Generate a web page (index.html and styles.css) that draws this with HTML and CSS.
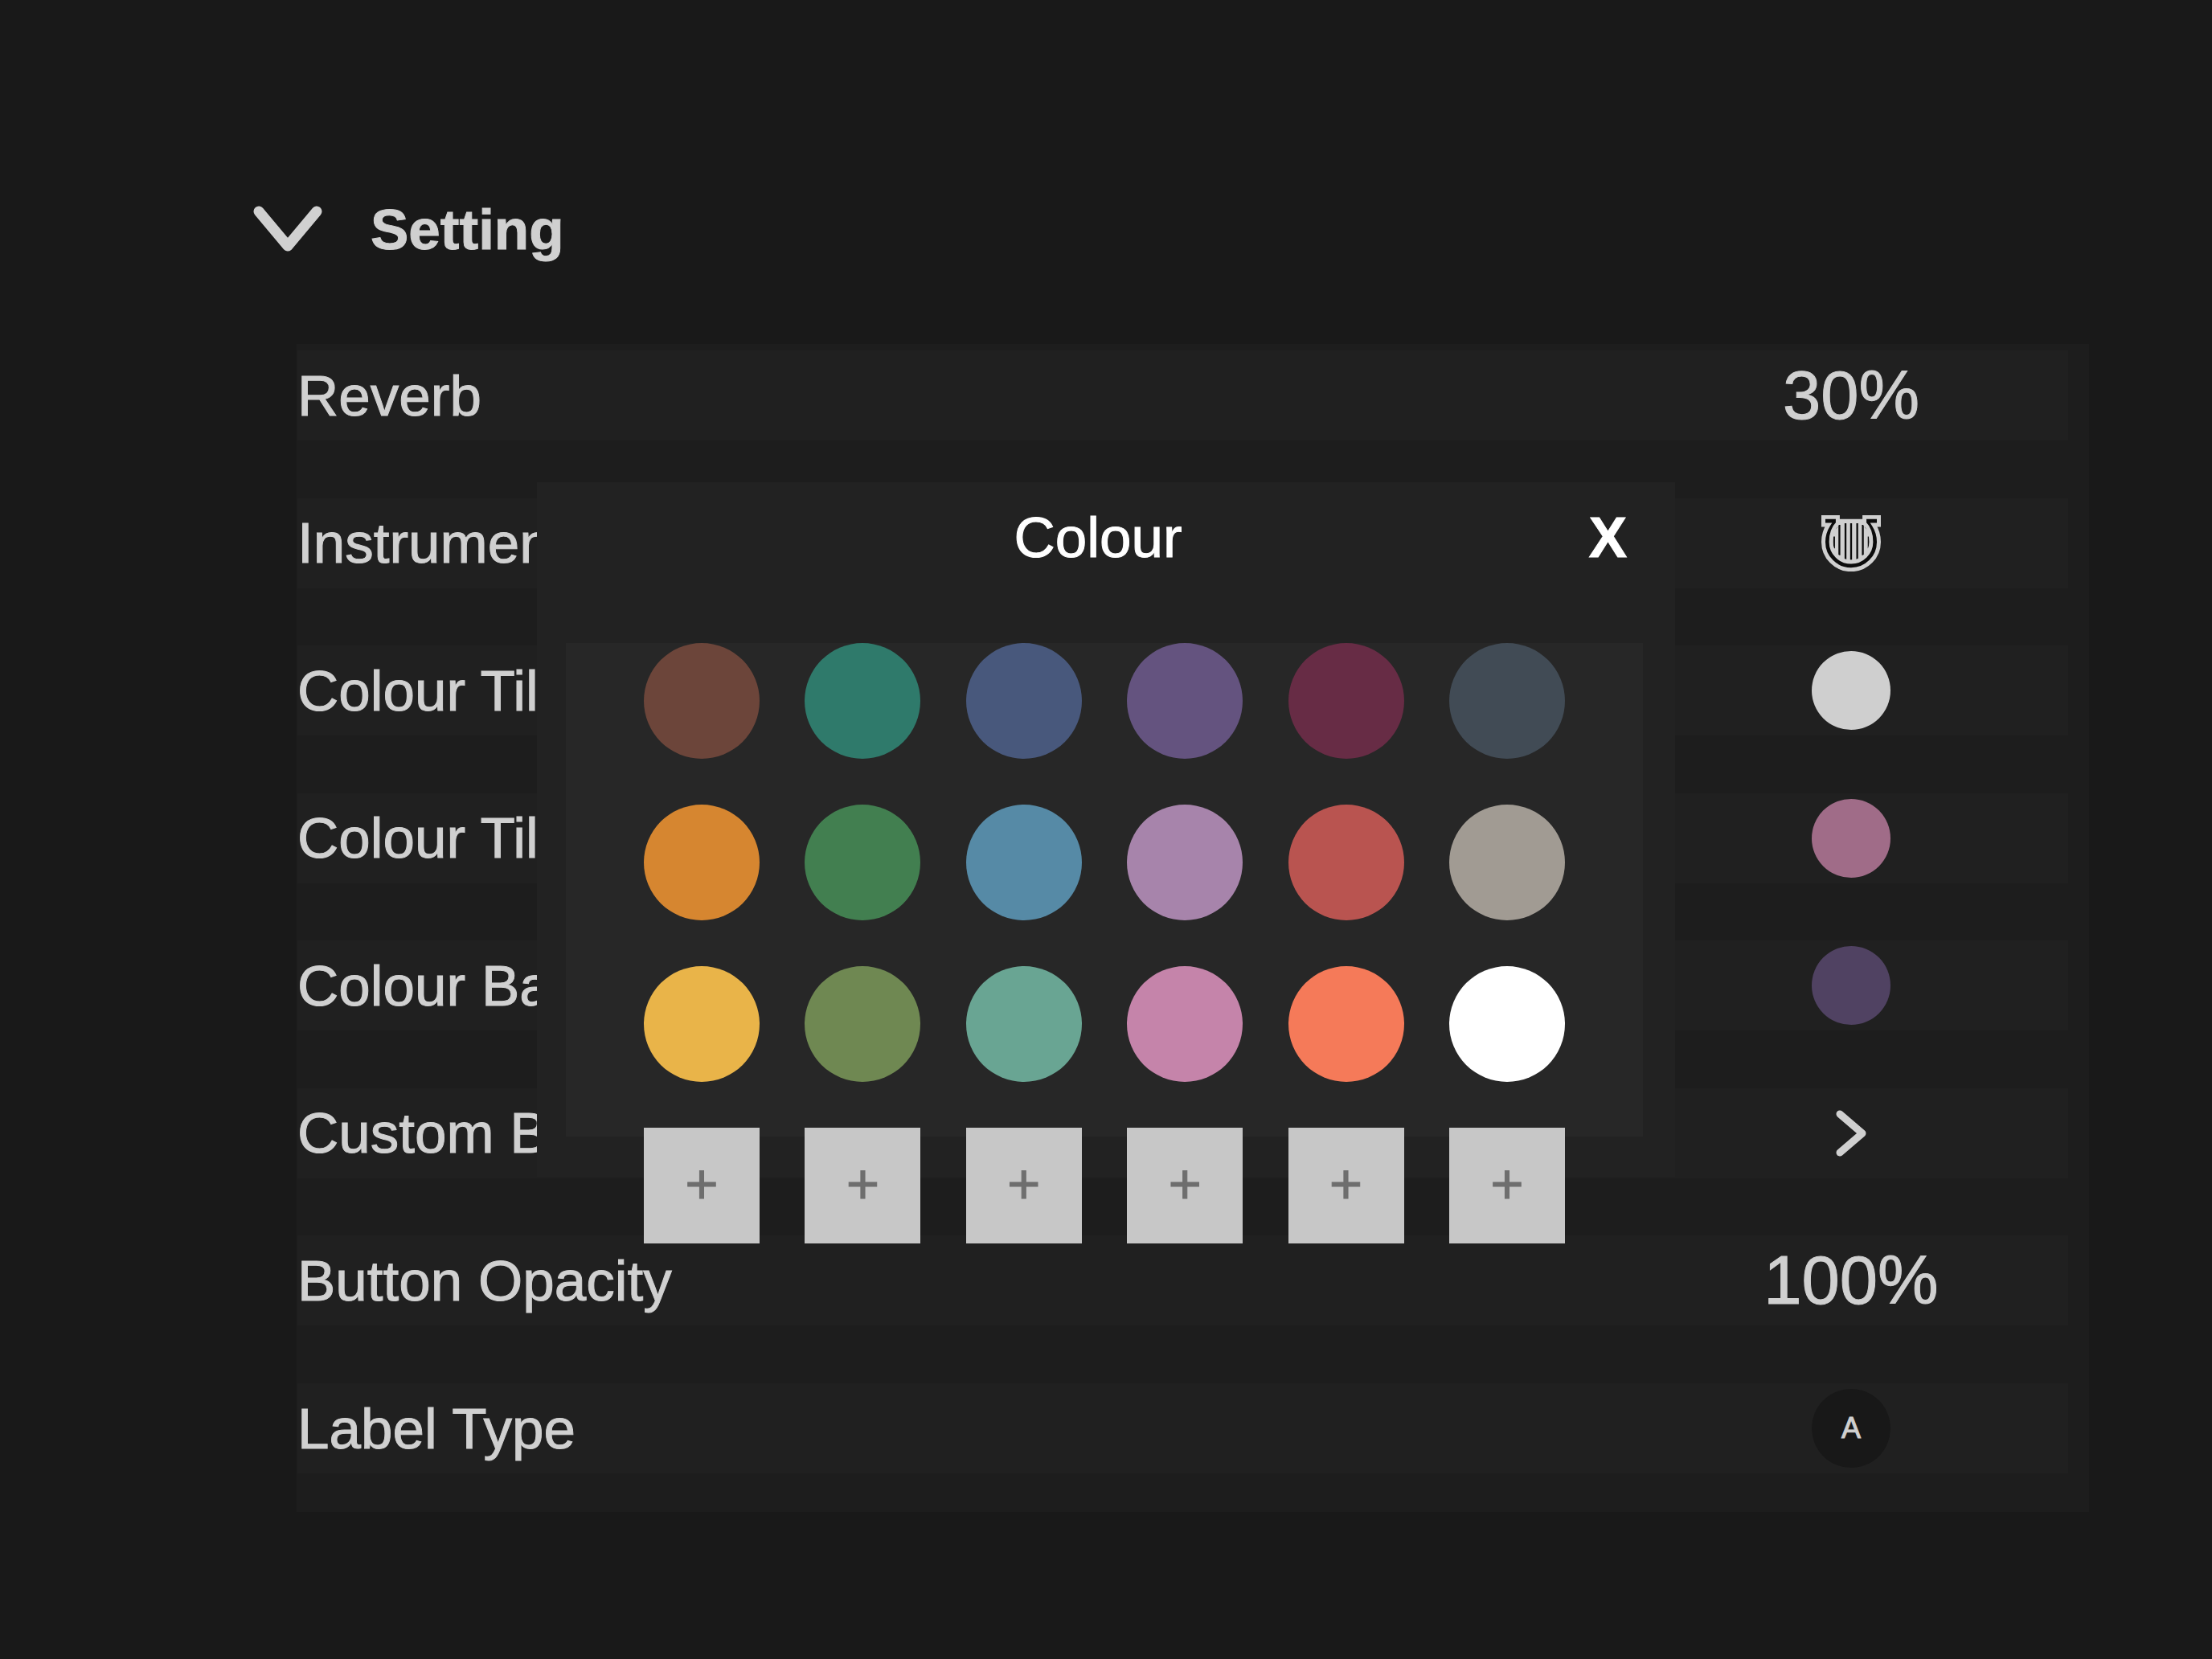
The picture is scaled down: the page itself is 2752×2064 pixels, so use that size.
FILE: index.html
```html
<!DOCTYPE html>
<html lang="en">
  <head>
    <meta charset="UTF-8" />
    <meta name="viewport" content="width=device-width, initial-scale=1.0" />
    <title>Setting</title>
    <link rel="stylesheet" href="styles.css">
  </head>
  <body>
    <header class="page-header">
      <button type="button" class="back-button" aria-label="Close settings">
        <svg width="86" height="58" viewBox="0 0 86 58">
          <path d="M7 7 L43 50 L79 7" fill="none" stroke="#d0d0d0" stroke-width="13" stroke-linecap="round" stroke-linejoin="round" />
        </svg>
      </button>
      <h1>Setting</h1>
    </header>

    <main class="settings">
      <div class="row">
        <span class="label">Reverb</span>
        <button type="button" class="value">30%</button>
      </div>
      <div class="row">
        <span class="label">Instrument</span>
        <button type="button" class="value" aria-label="Lyre">
          <svg width="74" height="70" viewBox="0 0 222 211">
            <circle cx="111" cy="100" r="75" fill="#d0d0d0" />
            <path d="M60 14 H162 V60 H60 Z" fill="#d0d0d0" />
            <path d="M47 80 V124 M67 36 V150 M90 30 V166 M111 30 V168 M134 30 V166 M155 36 V150 M177 80 V124" stroke="#0c0c0c" stroke-width="7" />
            <path d="M7 7 H61 V30 Q36 55 36 100 A75 75 0 0 0 186 100 Q186 55 161 30 V7 H215 V36 H196 Q215 66 215 100 A104 104 0 0 1 7 100 Q7 66 26 36 H7 Z" fill="#0c0c0c" stroke="#d0d0d0" stroke-width="15" />
          </svg>
        </button>
      </div>
      <div class="row">
        <span class="label">Colour Tile 1</span>
        <button type="button" class="value" aria-label="Colour Tile 1"><span class="dot light"></span></button>
      </div>
      <div class="row">
        <span class="label">Colour Tile 2</span>
        <button type="button" class="value" aria-label="Colour Tile 2"><span class="dot pink"></span></button>
      </div>
      <div class="row">
        <span class="label">Colour Background</span>
        <button type="button" class="value" aria-label="Colour Background"><span class="dot purple"></span></button>
      </div>
      <div class="row">
        <span class="label">Custom Button</span>
        <button type="button" class="value" aria-label="Custom Button">
          <svg width="38" height="58" viewBox="0 0 38 58">
            <path d="M5 5 L33 29 L5 53" fill="none" stroke="#d0d0d0" stroke-width="9" stroke-linecap="round" stroke-linejoin="round" />
          </svg>
        </button>
      </div>
      <div class="row">
        <span class="label">Button Opacity</span>
        <button type="button" class="value">100%</button>
      </div>
      <div class="row">
        <span class="label">Label Type</span>
        <button type="button" class="value"><span class="dot letter">A</span></button>
      </div>
    </main>

    <section class="modal" role="dialog" aria-labelledby="modal-title">
      <div class="modal-header">
        <h2 id="modal-title">Colour</h2>
        <button type="button" class="close-button" aria-label="Close">X</button>
      </div>
      <div class="palette">
        <button type="button" class="swatch brown" aria-label="Brown"></button>
        <button type="button" class="swatch teal" aria-label="Teal"></button>
        <button type="button" class="swatch navy" aria-label="Navy"></button>
        <button type="button" class="swatch violet" aria-label="Violet"></button>
        <button type="button" class="swatch wine" aria-label="Wine"></button>
        <button type="button" class="swatch slate" aria-label="Slate"></button>

        <button type="button" class="swatch orange" aria-label="Orange"></button>
        <button type="button" class="swatch green" aria-label="Green"></button>
        <button type="button" class="swatch blue" aria-label="Blue"></button>
        <button type="button" class="swatch lilac" aria-label="Lilac"></button>
        <button type="button" class="swatch red" aria-label="Red"></button>
        <button type="button" class="swatch stone" aria-label="Stone"></button>

        <button type="button" class="swatch yellow" aria-label="Yellow"></button>
        <button type="button" class="swatch olive" aria-label="Olive"></button>
        <button type="button" class="swatch mint" aria-label="Mint"></button>
        <button type="button" class="swatch rose" aria-label="Rose"></button>
        <button type="button" class="swatch coral" aria-label="Coral"></button>
        <button type="button" class="swatch white" aria-label="White"></button>

        <button type="button" class="add">+</button>
        <button type="button" class="add">+</button>
        <button type="button" class="add">+</button>
        <button type="button" class="add">+</button>
        <button type="button" class="add">+</button>
        <button type="button" class="add">+</button>
      </div>
    </section>
  </body>
</html>
```
FILE: styles.css
```css
* {
  box-sizing: border-box;
}
body {
  position: relative;
  min-height: 100vh;
  margin: 0;
  padding: 229px 153px 0 315px;
  background-color: #191919;
  color: #d0d0d0;
  font-family: "Liberation Sans", Arial, sans-serif;
  font-size: 71px;
  -webkit-text-stroke: 1px;
}
h1,
h2 {
  margin: 0;
  font-size: 71px;
}
button {
  padding: 0;
  border: none;
  background: none;
  color: inherit;
  font-family: inherit;
  font-size: 71px;
  cursor: pointer;
}
svg {
  display: block;
}
.page-header {
  display: flex;
  align-items: center;
  gap: 60px;
  height: 112px;
  margin-bottom: 87px;
}

/* settings list */
.settings {
  display: flex;
  flex-direction: column;
  justify-content: space-between;
  min-height: 70.4vh;
  margin-left: 54px;
  padding: 8px 26px 48px 1px;
  background-color: #1d1d1d;
}
.row {
  display: flex;
  align-items: center;
  justify-content: space-between;
  height: 112px;
  background-color: #202020;
}
.label {
  white-space: nowrap;
}
.value {
  display: flex;
  align-items: center;
  justify-content: center;
  width: 540px;
  height: 112px;
  font-size: 85px;
}
.dot {
  display: flex;
  align-items: center;
  justify-content: center;
  width: 98px;
  height: 98px;
  border-radius: 50%;
}
.light {
  background-color: #cfcfcf;
}
.pink {
  background-color: #a06c88;
}
.purple {
  background-color: #504262;
}
.letter {
  background-color: #181818;
  font-size: 36px;
}

/* colour picker */
.modal {
  position: absolute;
  top: 50%;
  left: 50%;
  width: 1416px;
  padding: 0 40px 50px 36px;
  background-color: #222222;
  color: #ffffff;
  transform: translate(-50%, -50%);
}
.modal-header {
  display: grid;
  grid-template-columns: 1fr auto 1fr;
  align-items: center;
  height: 136px;
  margin-bottom: 64px;
  padding: 0 20px 0 4px;
}
.modal-header h2 {
  grid-column: 2;
  font-weight: normal;
}
.close-button {
  justify-self: end;
  font-weight: bold;
}
/* the last row hangs out of the palette */
.palette {
  display: grid;
  grid-template-columns: repeat(6, 144px);
  grid-auto-rows: 144px;
  justify-content: space-between;
  row-gap: 57px;
  height: 614px;
  padding: 0 97px;
  background-color: #272727;
}
.swatch {
  border-radius: 50%;
}
.add {
  padding-bottom: 5px;
  background-color: #c7c7c7;
  color: #6e6e6e;
}
.brown {
  background-color: #6c453a;
}
.teal {
  background-color: #2f7a6b;
}
.navy {
  background-color: #48587c;
}
.violet {
  background-color: #64537f;
}
.wine {
  background-color: #672c45;
}
.slate {
  background-color: #414b55;
}
.orange {
  background-color: #d68630;
}
.green {
  background-color: #427f50;
}
.blue {
  background-color: #568aa6;
}
.lilac {
  background-color: #a784ab;
}
.red {
  background-color: #b95450;
}
.stone {
  background-color: #a19b93;
}
.yellow {
  background-color: #e9b449;
}
.olive {
  background-color: #6f8852;
}
.mint {
  background-color: #69a593;
}
.rose {
  background-color: #c584aa;
}
.coral {
  background-color: #f57a59;
}
.white {
  background-color: #ffffff;
}
```
